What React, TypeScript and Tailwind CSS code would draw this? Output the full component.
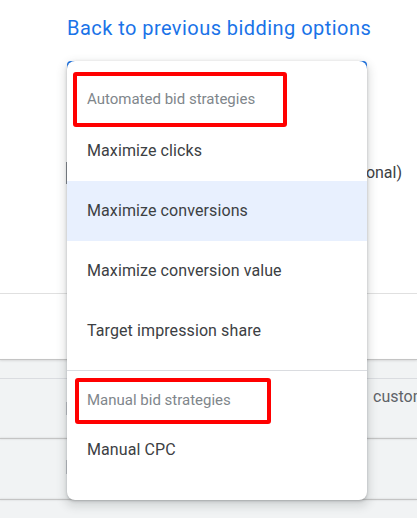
import React from "react";

const autoItems = ["Maximize clicks", "Maximize conversions", "Maximize conversion value", "Target impression share"];

export default function App() {
  return (
    <div className="relative w-[417px] h-[518px] overflow-hidden bg-white font-['Roboto',sans-serif]">
      {/* page behind the menu */}
      <div className="flex flex-col">
        <div className="mt-[14px] h-[28px] pl-[67px] text-[20px] leading-[28px] tracking-[0.45px] text-[#1a73e8] whitespace-nowrap">
          Back to previous bidding options
        </div>
        <div className="mt-[19px] ml-[67px] w-[300px] h-[56px] rounded-[4px] border-2 border-[#1a73e8]" />
        <div className="mt-[44px] h-[24px] flex items-center">
          <div className="ml-[66px] h-[22px] border-l border-[#80868b]" />
          <div className="flex-1 pr-[15px] text-right text-[16px] leading-[24px] text-[#3c4043] whitespace-nowrap overflow-hidden">
            Set a target cost per action (optional)
          </div>
        </div>
        <div className="h-[108px]" />
        <div className="h-px bg-[#e0e0e0]" />
        <div className="h-[65px] bg-white" />
        <div className="bg-[#f1f3f4] flex flex-col">
          <div className="h-px bg-[#c4c4c4] shadow-[0_1px_2px_rgba(0,0,0,0.15)]" />
          <div className="h-[18px]" />
          <div className="h-px bg-[#dadce0]" />
          <div className="h-[59px] flex items-start">
            <div className="ml-[66px] mt-[23px] h-[13px] border-l border-[#bdc1c6]" />
            <div className="ml-[306px] mt-[6px] text-[16px] leading-[24px] text-[#5f6368] whitespace-nowrap">custom bid limit</div>
          </div>
          <div className="h-px bg-[#c4c4c4] shadow-[0_0_2px_rgba(0,0,0,0.2)]" />
          <div className="h-[60px] flex items-start">
            <div className="ml-[66px] mt-[21px] h-[14px] border-l border-[#bdc1c6]" />
          </div>
          <div className="h-px bg-[#c4c4c4] shadow-[0_0_2px_rgba(0,0,0,0.2)]" />
          <div className="h-[20px]" />
        </div>
      </div>

      {/* dropdown menu */}
      <div className="absolute left-[67px] top-[61px] w-[300px] rounded-[8px] bg-white shadow-[0_1px_3px_rgba(60,64,67,0.3),0_4px_8px_3px_rgba(60,64,67,0.15)] pt-[8px] pb-[20px]">
        <div className="h-[52px] pt-[20px] pl-[20px] text-[15px] leading-[20px] text-[#80868b]">Automated bid strategies</div>
        {autoItems.map((label, i) => (
          <div
            key={label}
            className={`h-[60px] flex items-center pl-[20px] text-[16px] tracking-[0.1px] text-[#3c4043] ${i === 1 ? "bg-[#e8f0fe]" : ""}`}
          >
            {label}
          </div>
        ))}
        <div className="h-[9px]" />
        <div className="h-px bg-[#dadce0]" />
        <div className="h-[49px] pt-[19px] pl-[20px] text-[15px] leading-[20px] text-[#80868b]">Manual bid strategies</div>
        <div className="h-[60px] flex items-center pl-[20px] text-[16px] tracking-[0.1px] text-[#3c4043]">Manual CPC</div>

        {/* red highlight boxes */}
        <div className="absolute left-[6px] top-[11px] w-[214px] h-[55px] border-4 border-[#ff0000] rounded-[3px]" />
        <div className="absolute left-[8px] top-[317px] w-[196px] h-[46px] border-4 border-[#ff0000] rounded-[3px]" />
      </div>
    </div>
  );
}
